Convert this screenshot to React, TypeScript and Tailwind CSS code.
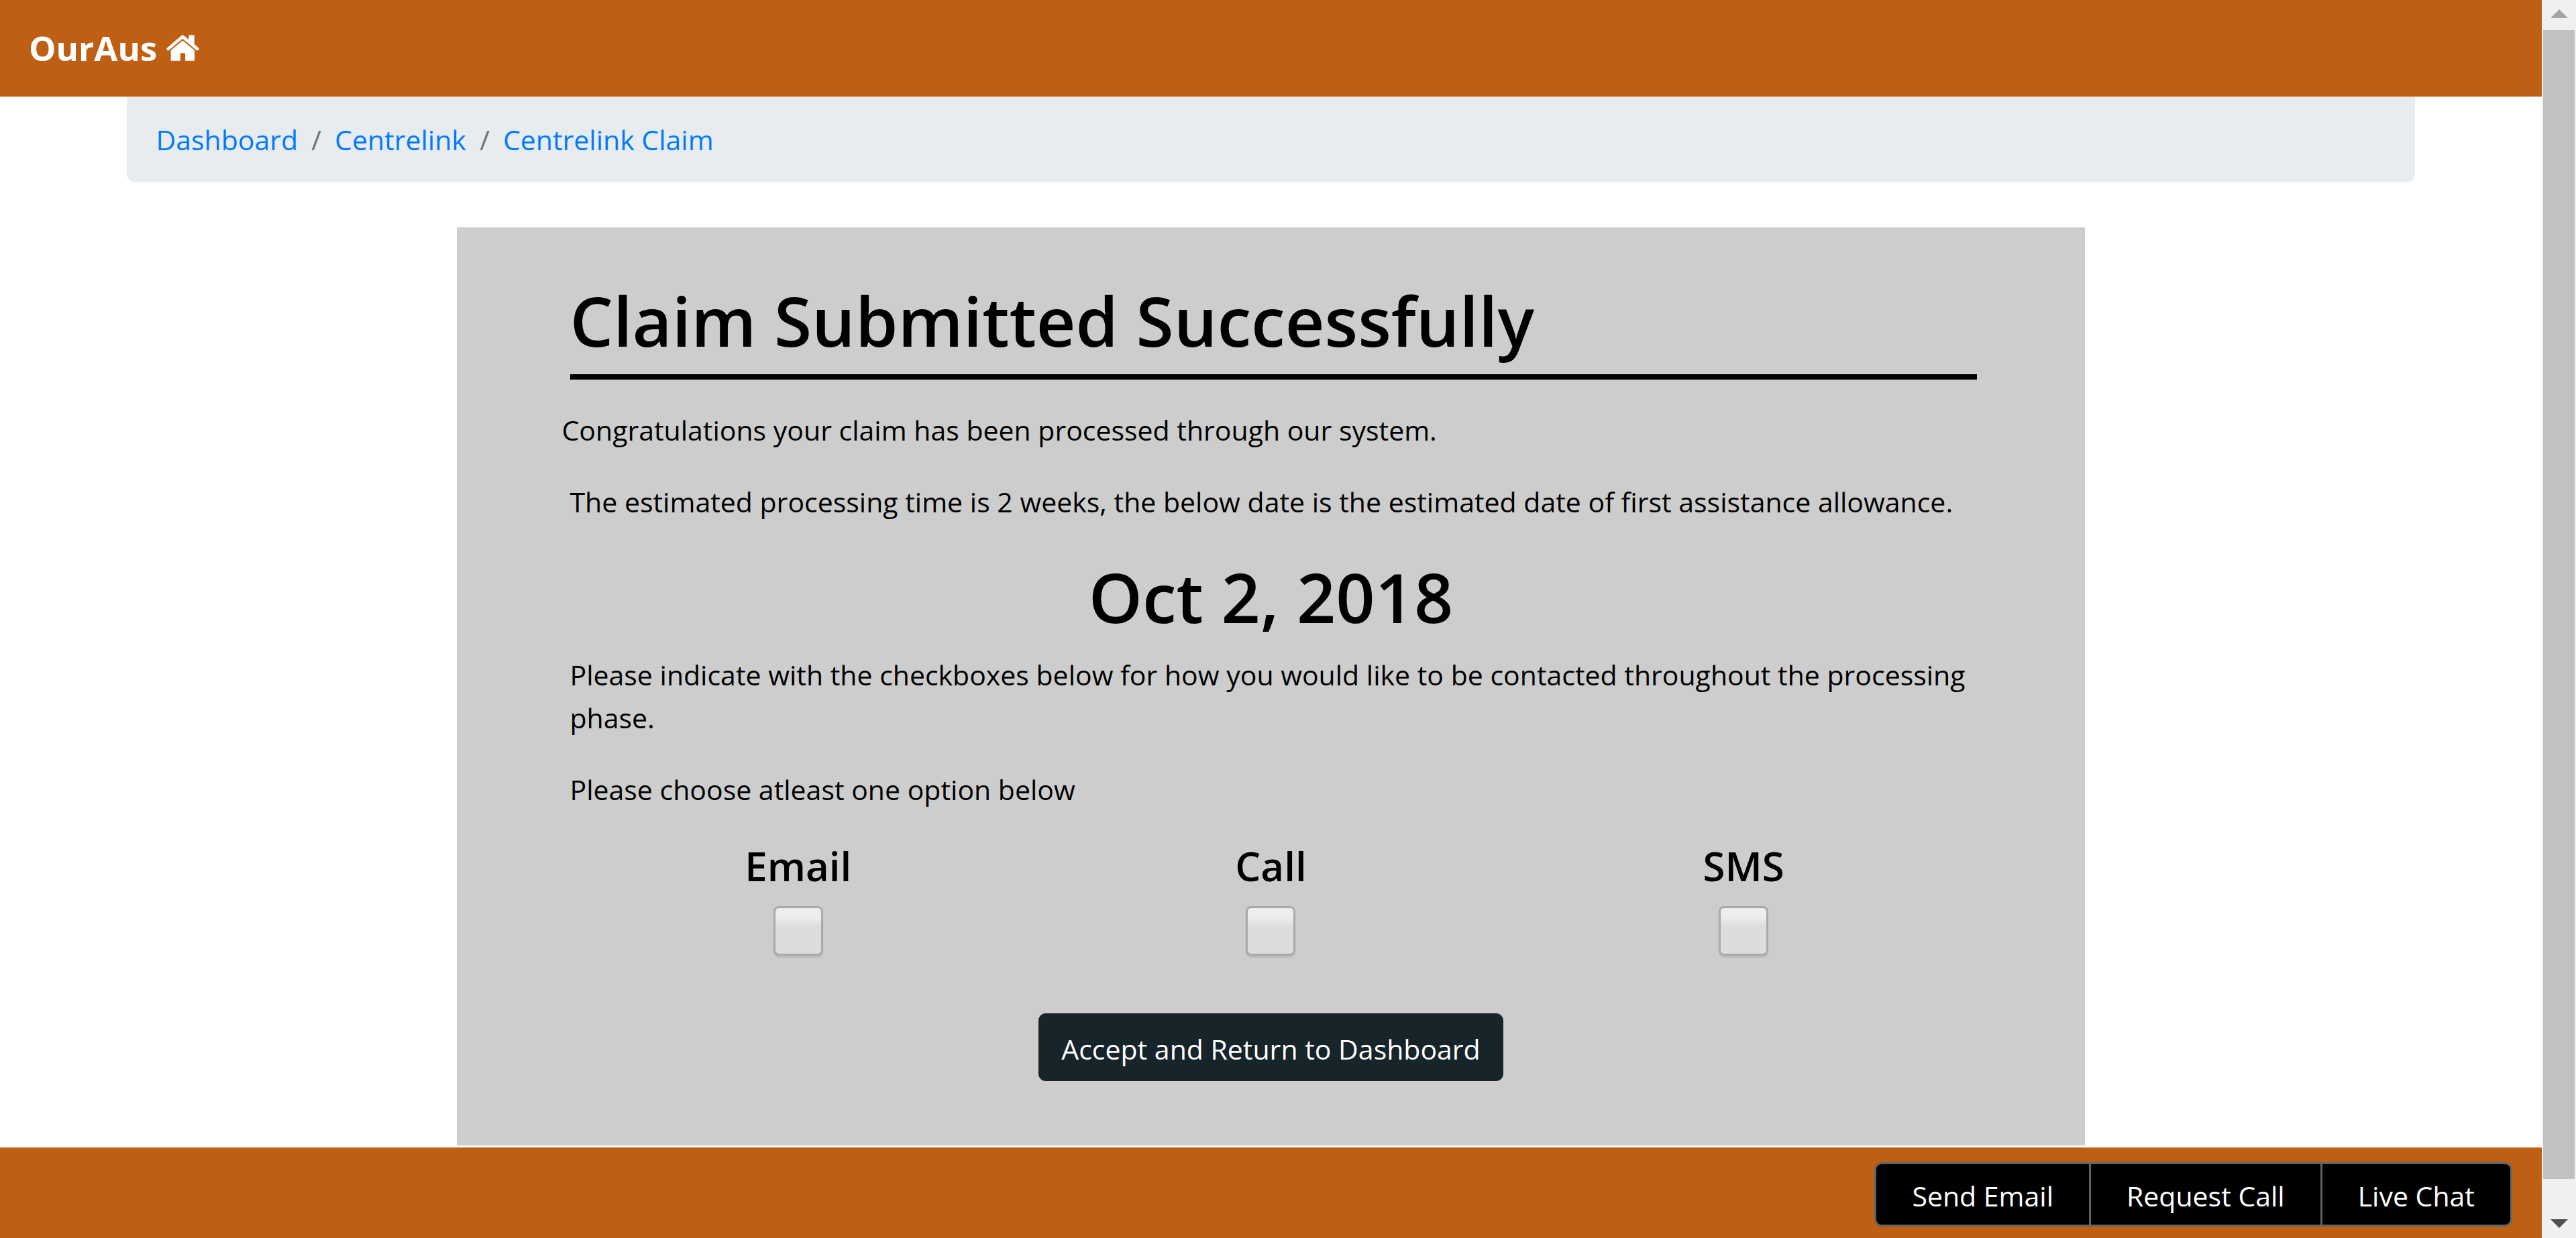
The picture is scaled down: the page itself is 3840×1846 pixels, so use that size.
import React from "react";

const crumbs = ["Dashboard", "Centrelink", "Centrelink Claim"];
const contactMethods = ["Email", "Call", "SMS"];
const supportActions = ["Send Email", "Request Call", "Live Chat"];

function HomeIcon() {
  return (
    <svg viewBox="0 0 148 117" role="img" aria-label="Home" className="h-[39px] w-[49px] fill-current">
      <path d="M69 2Q73 -1 78 2L101 21V4Q101 0 105 0H122Q126 0 126 4V42L146 59Q149 62 146 65L142 69Q139 71 136 69L73 17L11 69Q8 71 5 69L2 65Q-1 62 2 59Z" />
      <path d="M73 25L127 69V113Q127 117 123 117H85V82H63V117H24Q20 117 20 113V69Z" />
    </svg>
  );
}

function Header() {
  return (
    <header className="flex h-36 shrink-0 items-center bg-[#bf5f13] px-[43px] pb-0.5">
      <a href="#" className="flex items-center gap-3.5 text-[51px] font-bold leading-[80px] text-white">
        OurAus
        <HomeIcon />
      </a>
    </header>
  );
}

function Breadcrumb() {
  return (
    <nav aria-label="Breadcrumb" className="rounded-b-[11px] bg-[#e9ecef] px-[43px] pb-[31px] pt-8">
      <ol className="flex">
        {crumbs.map((name, i) => (
          <li key={name} className="flex">
            {i > 0 && <span className="px-5 text-[#6c757d]">/</span>}
            <a href="#" className="text-[#007bff]">
              {name}
            </a>
          </li>
        ))}
      </ol>
    </nav>
  );
}

function ContactOption({ name }: { name: string }) {
  const id = `contact-${name.toLowerCase()}`;
  return (
    <div className="flex flex-col items-center gap-[22px]">
      <label htmlFor={id} className="text-[60px] font-semibold leading-[76px]">
        {name}
      </label>
      <input
        id={id}
        type="checkbox"
        className="size-[74px] appearance-none rounded-[8px] border-[3px] border-[#a9a9a9] bg-linear-to-b from-[#ededed] from-20% to-[#dddddd] to-40% shadow-[0_3px_1px_#bababa] checked:to-[#8ab4f8]"
      />
    </div>
  );
}

function ClaimCard() {
  return (
    <section className="mx-auto mt-[68px] w-[71.2%] bg-[#cdcdcd] px-[157px] pb-24 pt-[75px] text-black">
      <h1 className="ml-3 mr-1 border-b-8 border-black pb-4 text-[102px] font-semibold leading-[128px]">
        Claim Submitted Successfully
      </h1>
      <p className="mt-[43px]">Congratulations your claim has been processed through our system.</p>
      <p className="ml-3 mt-[43px]">
        The estimated processing time is 2 weeks, the below date is the estimated date of first assistance allowance.
      </p>
      <h2 className="mb-5 mt-[46px] text-center text-[102px] font-semibold leading-[128px]">Oct 2, 2018</h2>
      <p className="ml-3">
        Please indicate with the checkboxes below for how you would like to be contacted throughout the processing
        phase.
      </p>
      <p className="ml-3 mt-[43px]">Please choose atleast one option below</p>
      <div className="mt-11 grid grid-cols-3">
        {contactMethods.map((name) => (
          <ContactOption key={name} name={name} />
        ))}
      </div>
      <div className="mt-[86px] flex justify-center">
        <button type="button" className="rounded-[11px] bg-[#17242a] px-[34px] pb-4 pt-[21px] text-white">
          Accept and Return to Dashboard
        </button>
      </div>
    </section>
  );
}

function Footer() {
  return (
    <footer className="mt-[3px] flex shrink-0 grow items-center justify-end bg-[#bf5f13] px-11 pt-[5px]">
      <div className="flex divide-x-3 divide-[#5f6468] overflow-hidden rounded-[11px] border-3 border-[#5f6468] bg-black">
        {supportActions.map((name) => (
          <button key={name} type="button" className="px-[53px] pb-[11px] pt-[15px] text-white">
            {name}
          </button>
        ))}
      </div>
    </footer>
  );
}

function Scrollbar() {
  return (
    <div aria-hidden="true" className="flex w-[51px] shrink-0 flex-col items-center bg-[#f0f0f0] px-[2px]">
      <svg viewBox="0 0 26 13" className="mb-[18px] mt-[14px] h-[13px] w-[26px] fill-[#a3a3a3]">
        <path d="M13 0 26 13H0Z" />
      </svg>
      <div className="w-full grow bg-[#c1c1c1]" />
      <svg viewBox="0 0 26 13" className="mb-[15px] mt-[60px] h-[13px] w-[26px] fill-[#505050]">
        <path d="M0 0H26L13 13Z" />
      </svg>
    </div>
  );
}

export default function App() {
  return (
    <div className="flex min-h-screen bg-white font-['Open_Sans',sans-serif] text-[41px] leading-[64px]">
      <div className="flex min-w-0 grow flex-col">
        <Header />
        <main className="mx-auto w-[90%]">
          <Breadcrumb />
          <ClaimCard />
        </main>
        <Footer />
      </div>
      <Scrollbar />
    </div>
  );
}
